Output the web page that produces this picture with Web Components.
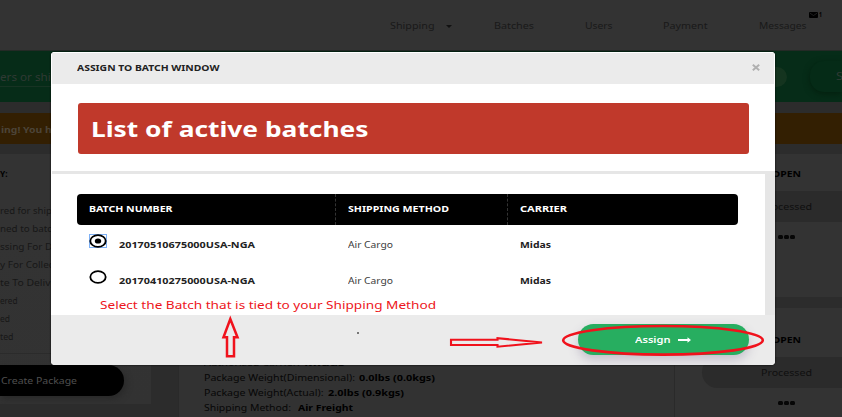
<!DOCTYPE html>
<html lang="en"><head><meta charset="utf-8"><title>Assign to batch</title>
<style>
body{margin:0;width:842px;height:417px;overflow:hidden;background:#2c2c2c;font-family:"Noto Sans","Open Sans",sans-serif;font-size:9.5px}
</style></head><body>
<app-screen></app-screen>
<script>
const define=(name,html,setup)=>customElements.define(name,class extends HTMLElement{
  connectedCallback(){
    if(this.shadowRoot)return;
    const t=document.createElement('template');t.innerHTML=html;
    this.attachShadow({mode:'open'}).append(t.content.cloneNode(true));
    if(setup)setup(this,this.shadowRoot);
  }
});

// One line of text stretched horizontally to the width in its "w" attribute.
define('wide-text',`<style>
:host{display:block;flex:none;white-space:nowrap;line-height:14px}
span{display:inline-block;transform-origin:0 50%}
</style><span><slot></slot></span>`,(el,root)=>{
  const s=root.querySelector('span'),w=+el.getAttribute('w');
  el.style.width=w+'px';
  s.style.transform='scaleX('+w/s.getBoundingClientRect().width+')';
});

define('top-nav',`<style>
:host{display:flex;height:51px;box-sizing:border-box;background:#333;padding:19px 0 0 390px;color:#191919;border-bottom:1px solid #242a26;position:relative}
i{border:3px solid transparent;border-top-color:#111;border-bottom:0;margin:5.5px 42px 0 11px;height:0}
.mail{position:absolute;left:809px;top:11px;display:flex;color:#000;gap:1px}
.mail wide-text{font-size:6.5px;line-height:8px;font-weight:bold}
svg{width:9px;height:7px}
</style>
<wide-text w="44.5">Shipping</wide-text><i></i>
<wide-text w="40" style="margin-right:51px">Batches</wide-text>
<wide-text w="27.5" style="margin-right:51px">Users</wide-text>
<wide-text w="44.5" style="margin-right:51px">Payment</wide-text>
<wide-text w="47.5">Messages</wide-text>
<div class="mail"><svg viewBox="0 0 9 7"><rect y="1" width="9" height="6" rx="1"/><path d="M1 2.2L4.5 4.5 8 2.2" fill="none" stroke="#333" stroke-width=".6"/></svg><wide-text w="3">1</wide-text></div>`);

define('search-band',`<style>
:host{display:flex;height:51px;background:#062c18;color:#303a34;align-items:center;justify-content:space-between;font-size:10.5px;background-image:linear-gradient(#173323,#173323);background-size:100% 1px;background-position:0 35px;background-repeat:no-repeat}
.right{display:flex;align-items:center;height:51px;width:100px;background:#062c18}
.end{width:45px;height:20px;border-radius:10px;background:#14341f}
.btn{box-sizing:border-box;margin-left:23px;width:32px;height:31px;border-radius:14px 0 0 14px;background:#052b17;box-shadow:0 2px 6px #04200f;padding:8px 0 0 26px}
</style><wide-text w="58">ers or ship</wide-text><div class="right"><div class="end"></div><div class="btn"><wide-text w="7">S</wide-text></div></div>`);

define('warn-band',`<style>:host{display:block;box-sizing:border-box;height:31px;margin:11px 0 10px;background:#331f02;color:#4c4438;font-weight:bold;padding:10px 0 0 1px}</style><wide-text w="69">ing! You have</wide-text>`);

define('status-panel',`<style>
:host{display:block;width:151px;height:250px;background:linear-gradient(#333 75px,#323232);overflow:hidden;color:#171717}
.h{color:#000;font-weight:bold;padding:13px 0 23px}
.row{height:18px}
.foot{border-top:1px solid #2b2b2b;margin-top:4.5px;padding-top:11px}
.btn{width:124px;height:31px;box-sizing:border-box;background:#000;border-radius:0 16px 16px 0;color:#4f4f4f;padding:9px 0 0 1px;box-shadow:2px 3px 6px #292929}
</style><div class="h"><wide-text w="7.5">Y:</wide-text></div>
<div class="row"><wide-text w="72">red for shipping</wide-text></div>
<div class="row"><wide-text w="58">ned to batch</wide-text></div>
<div class="row"><wide-text w="83">ssing For Delivery</wide-text></div>
<div class="row"><wide-text w="72">y For Collection</wide-text></div>
<div class="row"><wide-text w="66">te To Delivery</wide-text></div>
<div class="row"><wide-text w="17.5">ered</wide-text></div>
<div class="row"><wide-text w="10">ed</wide-text></div>
<div class="row"><wide-text w="13.5">ted</wide-text></div>
<div class="foot"><div class="btn"><wide-text w="76">Create Package</wide-text></div></div>`);

define('detail-panel',`<style>
:host{display:flex;flex-direction:column;justify-content:flex-end;width:497px;height:263px;background:#323232;box-sizing:border-box;padding:0 0 1.5px 25px;color:#070707;border-left:1px solid #2a2a2a}
div{display:flex;height:15px;gap:4px}b{display:contents;color:#000}
b wide-text{font-weight:bold}
</style>
<div><wide-text w="96">Authorized Carrier:</wide-text><b><wide-text w="41">Midas</wide-text></b></div>
<div><wide-text w="151">Package Weight(Dimensional):</wide-text><b><wide-text w="76">0.0lbs (0.0kgs)</wide-text></b></div>
<div><wide-text w="119.5">Package Weight(Actual):</wide-text><b><wide-text w="76">2.0lbs (0.9kgs)</wide-text></b></div>
<div style="gap:7px"><wide-text w="87">Shipping Method:</wide-text><b><wide-text w="55">Air Freight</wide-text></b></div>`);

define('open-card',`<style>
:host{display:block;width:167px;height:143px;background:#333;color:#0f0f0f}
.h{color:#000;font-weight:bold;padding:13px 0 0 97px;height:24px}
.s{height:31px;box-sizing:border-box;background:#2b2b2b;margin-left:27px;border-radius:16px 0 0 16px;padding:9px 0 0 59px}
.d{display:flex;gap:1px;padding:13px 0 0 103px}.d i{width:5px;height:4px;border-radius:1.5px;background:#060606}
</style><div class="h"><wide-text w="29">OPEN</wide-text></div><div class="s"><wide-text w="51">Processed</wide-text></div><div class="d"><i></i><i></i><i></i></div>`);

define('batch-row',`<style>
:host{display:flex;height:35.5px;color:#222;box-sizing:border-box;padding-left:12px}
svg{width:18px;height:14px;margin:-1px 12px 0 0;flex:none}
.dot,.focus{display:none}:host([selected]) .dot,:host([selected]) .focus{display:inline}
wide-text{margin-top:3px}.m{font-weight:normal;color:#3c3c3c}
</style><svg viewBox="0 0 18 14"><rect class="focus" x=".5" y=".5" width="17" height="13" fill="none" stroke="#7db0f5"/><ellipse cx="9" cy="7" rx="7.7" ry="5.8" fill="#fff" stroke="#000" stroke-width="1.8"/><ellipse class="dot" cx="9" cy="7" rx="3.2" ry="2.6"/></svg>
<wide-text w="136" style="font-weight:bold;margin-right:93px"><slot></slot></wide-text>
<wide-text class="m" w="45" style="margin-right:127px">Air Cargo</wide-text><wide-text w="31" style="font-weight:bold">Midas</wide-text>`);

define('batch-table',`<style>
:host{display:block;width:661px}
.head{display:flex;height:31px;background:#000;border-radius:4px;color:#fff;font-weight:bold;margin-bottom:10px}
.head div{box-sizing:border-box;padding:8px 0 0 12px;border-left:1px dashed #333}
.head div:first-child{border:0;width:258px}.head div:nth-child(2){width:172px}
</style><div class="head"><div><wide-text w="83.5">BATCH NUMBER</wide-text></div><div><wide-text w="101">SHIPPING METHOD</wide-text></div><div><wide-text w="47">CARRIER</wide-text></div></div>
<batch-row selected>20170510675000USA-NGA</batch-row><batch-row>20170410275000USA-NGA</batch-row>`);

define('assign-button',`<style>
:host{display:flex;box-sizing:border-box;width:171px;height:31px;border-radius:16px;background:#27ae60;color:#fff;padding:9px 0 0 57.5px;font-weight:600;box-shadow:0 5px 11px #c4bfcb}
svg{width:13px;height:6px;margin:4px 0 0 7.5px}
</style><wide-text w="35.5">Assign</wide-text><svg viewBox="0 0 13 6"><path d="M0 2H9.5V.2L13 3 9.5 5.8V4H0z" fill="#fff"/></svg>`);

define('assign-dialog',`<style>
:host{display:flex;flex-direction:column;width:723.5px;height:313px;border-radius:4px;overflow:hidden;background:#fff;box-shadow:0 0 2px #000}
header{height:32px;box-sizing:border-box;border:solid #fff;border-width:1px 1px 0;background:#ebebeb;display:flex;justify-content:space-between;padding:8px 13.5px 0 25px;color:#222;font-weight:bold;font-size:9.3px}
header svg{width:8px;height:7px;margin-top:2.5px}
.banner{margin:19px 26px 17px 27px;height:51px;box-sizing:border-box;background:#c0392b;border-radius:3px;color:#fff;font-weight:bold;font-size:20.5px;padding:12px 0 0 12.5px}
.banner wide-text{line-height:28px}
.body{height:144px;box-sizing:border-box;border-top:3px solid #e6e6e6;border-right:10px solid #e6e6e6;padding:20px 0 0 25px;margin-left:1px}
footer{flex:1;background:#ebebeb;display:flex;justify-content:space-between;padding:9px 26px 0 306px}
footer i{width:1.5px;height:1.5px;background:#777;margin-top:8px}
</style><header><wide-text w="142.5">ASSIGN TO BATCH WINDOW</wide-text><svg viewBox="0 0 8 7"><path d="M.8.8L7.2 6.2M7.2.8L.8 6.2" stroke="#b0b0b0" stroke-width="2"/></svg></header>
<div class="banner"><wide-text w="277.5">List of active batches</wide-text></div>
<div class="body"><batch-table></batch-table></div>
<footer><i></i><assign-button></assign-button></footer>`);

define('markup-notes',`<style>
:host{position:absolute;inset:0;color:#ed1420}
svg{position:absolute;inset:0}
wide-text{position:absolute;left:99.5px;top:297px;font-size:11.5px;line-height:16px}
</style><svg width="842" height="417" fill="none" stroke="#f0121c" stroke-width="2.5"><path d="M230.3 319L237.5 337.2H234V356.3H227V337.2H223.5Z"/><path stroke-width="2.1" d="M451 339.8H497.5V338.2L542 342.5 497.5 346.7V345H451Z"/><ellipse cx="663" cy="340.3" rx="99.8" ry="14.3" stroke-width="2.6"/></svg>
<wide-text w="336">Select the Batch that is tied to your Shipping Method</wide-text>`);

define('app-screen',`<style>
:host{display:block;position:relative;width:842px;height:417px;overflow:hidden}
main{display:flex;height:263px}detail-panel{margin-left:27px}.cards{display:flex;flex-direction:column;gap:11px;border-left:1px solid #2a2a2a;margin-left:-1px}
open-card{flex:none}open-card+open-card{padding-top:12px}
assign-dialog{position:absolute;left:51px;top:52px}
</style><top-nav></top-nav><search-band></search-band><warn-band></warn-band>
<main><status-panel></status-panel><detail-panel></detail-panel><div class="cards"><open-card></open-card><open-card></open-card></div></main>
<assign-dialog></assign-dialog><markup-notes></markup-notes>`);
</script></body></html>
